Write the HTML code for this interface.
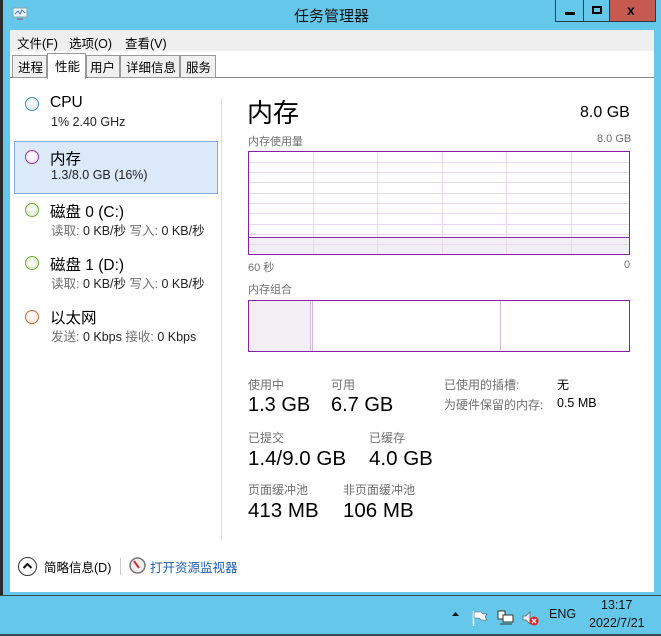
<!DOCTYPE html>
<html><head><meta charset="utf-8"><style>
*{margin:0;padding:0;box-sizing:border-box}
body{width:661px;height:636px;position:relative;overflow:hidden;background:#65c8ea;font-family:"Liberation Sans","Noto Sans CJK SC",sans-serif;color:#000}
.a{position:absolute;white-space:nowrap}
.g{color:#707070}
</style></head><body>
<div class="a" style="left:0;top:0;width:3px;height:595px;background:#2b2b2b"></div>
<svg class="a" style="left:12px;top:7px" width="16" height="14"><rect x="1" y="1" width="14" height="9" fill="#e8f4fa" stroke="#8aa" /><polyline points="3,7 6,4 8,7 10,3 13,6" fill="none" stroke="#4a7fb0" stroke-width="1"/><rect x="5" y="11" width="6" height="2" fill="#889"/></svg>
<div class="a" style="left:294px;top:5px;font-size:15px;color:#111">任务管理器</div>
<div class="a" style="left:555px;top:0;width:101px;height:22px;border:1px solid #2a3a4a;border-top:none;background:#65c8ea"></div>
<div class="a" style="left:583px;top:0;width:1px;height:22px;background:#2a3a4a"></div>
<div class="a" style="left:609px;top:0;width:47px;height:22px;background:#c75a50;border:1px solid #2a3a4a;border-top:none"></div>
<div class="a" style="left:565px;top:12px;width:10px;height:3px;background:#000"></div>
<div class="a" style="left:592px;top:6px;width:10px;height:8px;border:2px solid #000"></div>
<div class="a" style="left:627px;top:2px;font-size:14px;font-weight:bold">x</div>
<div class="a" style="left:10px;top:30px;width:644px;height:562px;background:#fff"></div>
<div class="a" style="left:10px;top:30px;width:644px;height:21px;background:#efefef"></div>
<div class="a" style="left:17px;top:33px;font-size:12.5px">文件(F)</div>
<div class="a" style="left:69px;top:33px;font-size:12.5px">选项(O)</div>
<div class="a" style="left:125px;top:33px;font-size:12.5px">查看(V)</div>
<div class="a" style="left:10px;top:77px;width:644px;height:1px;background:#888"></div>
<div class="a" style="left:12px;top:55px;width:35px;height:23px;background:#f0f0f0;border:1px solid #999;font-size:12.5px;padding:1px 0 0 5px">进程</div>
<div class="a" style="left:47px;top:53px;width:39px;height:26px;background:#fff;border:1px solid #999;border-bottom:none;font-size:12.5px;padding:2px 0 0 7px">性能</div>
<div class="a" style="left:86px;top:55px;width:34px;height:23px;background:#f0f0f0;border:1px solid #999;font-size:12.5px;padding:1px 0 0 3px">用户</div>
<div class="a" style="left:120px;top:55px;width:60px;height:23px;background:#f0f0f0;border:1px solid #999;font-size:12.5px;padding:1px 0 0 5px">详细信息</div>
<div class="a" style="left:180px;top:55px;width:36px;height:23px;background:#f0f0f0;border:1px solid #999;font-size:12.5px;padding:1px 0 0 5px">服务</div>
<div class="a" style="left:221px;top:98px;width:1px;height:442px;background:#ddd"></div>
<div class="a" style="left:14px;top:141px;width:204px;height:53px;background:#dce9f9;border:1px solid #84acdd"></div>
<div class="a" style="left:25px;top:97px;width:14px;height:14px;border-radius:50%;border:1.5px solid #3b8fd0;background:radial-gradient(circle at 40% 35%,#fff,#dbe9f5)"></div>
<div class="a" style="left:50px;top:94px;font-size:15.5px">CPU</div>
<div class="a" style="left:51px;top:115px;font-size:12.5px;color:#222">1% 2.40 GHz</div>
<div class="a" style="left:25px;top:150px;width:14px;height:14px;border-radius:50%;border:1.5px solid #9b2eb5;background:radial-gradient(circle at 40% 35%,#fff,#f0ddf5)"></div>
<div class="a" style="left:50px;top:147px;font-size:15.5px">内存</div>
<div class="a" style="left:51px;top:168px;font-size:12.5px;color:#222">1.3/8.0 GB (16%)</div>
<div class="a" style="left:25px;top:203px;width:14px;height:14px;border-radius:50%;border:1.5px solid #6cb02d;background:radial-gradient(circle at 40% 35%,#fff,#dcf0cc)"></div>
<div class="a" style="left:50px;top:200px;font-size:15.5px">磁盘 0 (C:)</div>
<div class="a" style="left:51px;top:220px;font-size:12.5px;color:#222"><span class="g">读取:</span> 0 KB/秒 <span class="g">写入:</span> 0 KB/秒</div>
<div class="a" style="left:25px;top:256px;width:14px;height:14px;border-radius:50%;border:1.5px solid #6cb02d;background:radial-gradient(circle at 40% 35%,#fff,#dcf0cc)"></div>
<div class="a" style="left:50px;top:253px;font-size:15.5px">磁盘 1 (D:)</div>
<div class="a" style="left:51px;top:273px;font-size:12.5px;color:#222"><span class="g">读取:</span> 0 KB/秒 <span class="g">写入:</span> 0 KB/秒</div>
<div class="a" style="left:25px;top:310px;width:14px;height:14px;border-radius:50%;border:1.5px solid #c06a30;background:radial-gradient(circle at 40% 35%,#fff,#f8e2d2)"></div>
<div class="a" style="left:50px;top:306px;font-size:15.5px">以太网</div>
<div class="a" style="left:51px;top:326px;font-size:12.5px;color:#222"><span class="g">发送:</span> 0 Kbps <span class="g">接收:</span> 0 Kbps</div>
<div class="a" style="left:247px;top:93px;font-size:26px">内存</div>
<div class="a" style="left:580px;top:104px;font-size:16px">8.0 GB</div>
<div class="a g" style="left:248px;top:133px;font-size:11px">内存使用量</div>
<div class="a g" style="left:597px;top:133px;font-size:11px">8.0 GB</div>
<svg class="a" style="left:248px;top:151px" width="382" height="104">
<rect x="0" y="86" width="382" height="18" fill="#f2eff4"/>
<g stroke="#ead8f0" stroke-width="1">
<line x1="0" x2="382" y1="11.5" y2="11.5"/><line x1="0" x2="382" y1="21.5" y2="21.5"/><line x1="0" x2="382" y1="31.5" y2="31.5"/><line x1="0" x2="382" y1="42.5" y2="42.5"/><line x1="0" x2="382" y1="52.5" y2="52.5"/><line x1="0" x2="382" y1="62.5" y2="62.5"/><line x1="0" x2="382" y1="73.5" y2="73.5"/><line x1="0" x2="382" y1="83.5" y2="83.5"/><line x1="0" x2="382" y1="93.5" y2="93.5"/>
<line x1="65.5" x2="65.5" y1="0" y2="104"/><line x1="129.5" x2="129.5" y1="0" y2="104"/><line x1="194.5" x2="194.5" y1="0" y2="104"/><line x1="258.5" x2="258.5" y1="0" y2="104"/><line x1="323.5" x2="323.5" y1="0" y2="104"/>
</g>
<line x1="0" x2="382" y1="86.5" y2="86.5" stroke="#8b2ea6"/>
<rect x="0.5" y="0.5" width="381" height="103" fill="none" stroke="#8b1fa8"/>
</svg>
<div class="a g" style="left:248px;top:259px;font-size:11px">60 秒</div>
<div class="a g" style="left:624px;top:259px;font-size:11px">0</div>
<div class="a g" style="left:248px;top:281px;font-size:11px">内存组合</div>
<svg class="a" style="left:248px;top:300px" width="382" height="52">
<rect x="0" y="0" width="62" height="52" fill="#f2eff4"/>
<line x1="62.5" x2="62.5" y1="0" y2="52" stroke="#d8b8e0"/>
<line x1="64.5" x2="64.5" y1="0" y2="52" stroke="#d8b8e0"/>
<line x1="252.5" x2="252.5" y1="0" y2="52" stroke="#d8b8e0"/>
<rect x="0.5" y="0.5" width="381" height="51" fill="none" stroke="#8b1fa8"/>
</svg>
<div class="a g" style="left:248px;top:376px;font-size:12px">使用中</div>
<div class="a" style="left:248px;top:394px;font-size:20px">1.3 GB</div>
<div class="a g" style="left:331px;top:376px;font-size:12px">可用</div>
<div class="a" style="left:331px;top:394px;font-size:20px">6.7 GB</div>
<div class="a g" style="left:444px;top:376px;font-size:12px">已使用的插槽:</div>
<div class="a" style="left:557px;top:376px;font-size:12px">无</div>
<div class="a g" style="left:444px;top:396px;font-size:12px">为硬件保留的内存:</div>
<div class="a" style="left:557px;top:396px;font-size:12.5px">0.5 MB</div>
<div class="a g" style="left:248px;top:429px;font-size:12px">已提交</div>
<div class="a" style="left:248px;top:447px;font-size:20.5px">1.4/9.0 GB</div>
<div class="a g" style="left:369px;top:429px;font-size:12px">已缓存</div>
<div class="a" style="left:369px;top:447px;font-size:20.5px">4.0 GB</div>
<div class="a g" style="left:248px;top:481px;font-size:12px">页面缓冲池</div>
<div class="a" style="left:248px;top:499px;font-size:20.5px">413 MB</div>
<div class="a g" style="left:343px;top:481px;font-size:12px">非页面缓冲池</div>
<div class="a" style="left:343px;top:499px;font-size:20.5px">106 MB</div>
<div class="a" style="left:18px;top:557px;width:19px;height:19px;border-radius:50%;border:1.5px solid #333"></div>
<svg class="a" style="left:18px;top:557px" width="19" height="19"><polyline points="5.5,11 9.5,7 13.5,11" fill="none" stroke="#111" stroke-width="2"/></svg>
<div class="a" style="left:44px;top:557px;font-size:12.5px">简略信息(D)</div>
<div class="a" style="left:120px;top:558px;width:1px;height:17px;background:#ccc"></div>
<svg class="a" style="left:129px;top:557px" width="17" height="17"><circle cx="8.5" cy="8.5" r="7.5" fill="#eee" stroke="#777" stroke-width="1.5"/><line x1="5" y1="4" x2="10" y2="11" stroke="#c33" stroke-width="2"/></svg>
<div class="a" style="left:150px;top:557px;font-size:12.5px;color:#1a5fb4">打开资源监视器</div>
<div class="a" style="left:0;top:595px;width:661px;height:1px;background:#3a4a55"></div>
<div class="a" style="left:0;top:634px;width:661px;height:2px;background:#3a4a55"></div>
<svg class="a" style="left:450px;top:608px" width="90" height="20">
<polygon points="2,8 9,8 5.5,4" fill="#111"/>
<line x1="23.5" y1="3" x2="23.5" y2="18" stroke="#fff" stroke-width="1.5"/><path d="M24 4h7l2 2h4l-2 3 2 3h-6l-2-2h-5z" fill="#fff" stroke="#555" stroke-width=".6"/>
<rect x="48" y="3" width="7" height="8" fill="#fff" stroke="#333"/><rect x="53" y="7" width="10" height="7" fill="#fff" stroke="#333"/><line x1="50" y1="16" x2="62" y2="16" stroke="#333"/>
<path d="M73 8h3l4-4v12l-4-4h-3z" fill="#eee" stroke="#666" stroke-width=".8"/><circle cx="84" cy="13" r="4.5" fill="#e02525"/><path d="M82 11l4 4M86 11l-4 4" stroke="#fff" stroke-width="1.3"/>
</svg>
<div class="a" style="left:549px;top:607px;font-size:12.5px;color:#111">ENG</div>
<div class="a" style="left:601px;top:598px;font-size:12.5px;color:#111">13:17</div>
<div class="a" style="left:589px;top:616px;font-size:12.5px;color:#111">2022/7/21</div>
</body></html>
